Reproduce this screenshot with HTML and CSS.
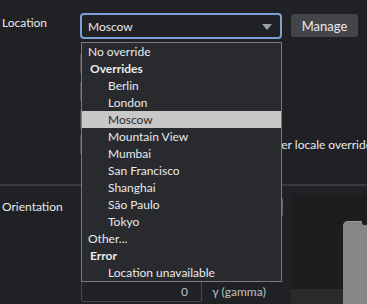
FILE: index.html
```html
<!DOCTYPE html>
<html lang="en">
<head>
    <meta charset="UTF-8">
    <meta name="viewport" content="width=device-width, initial-scale=1.0">
    <title>Sensors</title>
    <link rel="stylesheet" href="styles.css">
</head>
<body>
    <section class="group location">
        <div class="row">
            <div class="label label-top">Location</div>
            <div class="select-wrap">
                <div class="select is-focused">Moscow<span class="arrow"></span></div>
                <ul class="dropdown">
                    <li class="option">No override</li>
                    <li class="optgroup">Overrides</li>
                    <li class="option child">Berlin</li>
                    <li class="option child">London</li>
                    <li class="option child selected">Moscow</li>
                    <li class="option child">Mountain View</li>
                    <li class="option child">Mumbai</li>
                    <li class="option child">San Francisco</li>
                    <li class="option child">Shanghai</li>
                    <li class="option child">São Paulo</li>
                    <li class="option child">Tokyo</li>
                    <li class="option">Other...</li>
                    <li class="optgroup">Error</li>
                    <li class="option child">Location unavailable</li>
                </ul>
            </div>
            <button class="btn">Manage</button>
        </div>

        <div class="fields">
            <div class="field"><div class="input">55.755826</div><span class="field-name">Latitude</span></div>
            <div class="field"><div class="input">37.6173</div><span class="field-name">Longitude</span></div>
            <div class="field"><div class="input">Europe/Moscow</div><span class="field-name">Timezone ID</span></div>
            <div class="field note">
                <div class="input">ru-RU</div><span class="field-name">Locale</span>
                <span class="hint">user locale override</span>
            </div>
        </div>
    </section>

    <section class="group orientation">
        <div class="label">Orientation</div>
        <div class="orient-inputs">
            <div class="select">Off<span class="arrow"></span></div>
            <div class="field"><div class="input num">0</div><span class="field-name">α (alpha)</span></div>
            <div class="field"><div class="input num">90</div><span class="field-name">β (beta)</span></div>
            <div class="field"><div class="input num">0</div><span class="field-name">γ (gamma)</span></div>
        </div>
        <div class="scene">
            <div class="phone"><span class="notch"></span></div>
            <div class="floor"></div>
        </div>
    </section>
</body>
</html>
```

FILE: styles.css
```css
body {
    margin: 0;
    height: 304px;
    overflow: hidden;
    background-color: #202124;
    color: #e8eaed;
    font-family: Lato, "Liberation Sans", sans-serif;
    font-size: 12px;
}
.group {
    padding-left: 2px;
}
.location {
    padding-top: 13px;
    height: 171px;
}
.row {
    display: flex;
    align-items: flex-start;
}
.label {
    width: 78px;
    line-height: 17px;
}
.label-top {
    padding-top: 1px;
}
.select-wrap {
    position: relative;
}
.select {
    position: relative;
    box-sizing: border-box;
    width: 202px;
    height: 26px;
    padding-left: 7px;
    line-height: 23px;
    border: 1px solid #5f6368;
    border-radius: 4px;
    background-color: #202124;
}
.select.is-focused {
    border: 2px solid #7c9fd6;
    line-height: 23px;
    padding-left: 6px;
}
.arrow {
    position: absolute;
    right: 8px;
    top: 9px;
    width: 0;
    height: 0;
    border-left: 5px solid transparent;
    border-right: 5px solid transparent;
    border-top: 6px solid #9aa0a6;
}
.dropdown {
    position: absolute;
    top: 29px;
    left: 1px;
    z-index: 2;
    width: 199px;
    margin: 0;
    padding: 0;
    list-style: none;
    border: 1px solid #7b7b7b;
    background-color: #292a2d;
}
.dropdown li {
    height: 17px;
    line-height: 17px;
    white-space: nowrap;
}
.option {
    padding-left: 6px;
}
.option.child {
    padding-left: 26px;
}
.optgroup {
    padding-left: 8px;
    font-weight: bold;
}
.selected {
    background-color: #c8c8c8;
    color: #2b2b2b;
}
.btn {
    margin-left: 9px;
    margin-top: 1px;
    height: 23px;
    width: 67px;
    padding: 0;
    border: none;
    border-radius: 3px;
    background-color: #444548;
    color: #e8eaed;
    font-family: inherit;
    font-size: 13px;
}
.fields {
    padding-left: 78px;
    padding-top: 7px;
}
.field {
    display: flex;
    align-items: center;
    margin-top: 7px;
}
.field > * {
    flex-shrink: 0;
}
.input {
    box-sizing: border-box;
    width: 121px;
    height: 21px;
    padding: 0 8px;
    line-height: 19px;
    border: 1px solid #4a4b4e;
    border-radius: 2px;
    color: #bdc1c6;
}
.input.num {
    text-align: right;
    padding-right: 13px;
}
.field-name {
    margin-left: 10px;
    color: #bdc1c6;
    white-space: nowrap;
}
.note {
    margin-top: 4px;
}
.note .hint {
    margin-left: 25px;
    white-space: nowrap;
}
.orientation {
    display: flex;
    border-top: 2px solid #3a3b3e;
    height: 118px;
}
.orientation .label {
    width: 79px;
    padding-top: 12px;
}
.orient-inputs {
    width: 202px;
    padding-top: 10px;
}
.orient-inputs .select {
    height: 22px;
    line-height: 20px;
    margin-bottom: 9px;
}
.orient-inputs .field {
    margin-top: 6px;
}
.orient-inputs .field:first-of-type {
    margin-top: 0;
}
.scene {
    position: relative;
    overflow: hidden;
    margin-left: 8px;
    margin-top: 8px;
    flex: 1;
    background-color: #1d1d1f;
}
.floor {
    height: 100%;
    margin-top: 95px;
    background-color: #2a2a2c;
}
.phone {
    position: absolute;
    left: 52px;
    top: 27px;
    z-index: 1;
    width: 60px;
    height: 120px;
    border-radius: 5px 0 0 0;
    background-color: #868686;
    border-top: 1px solid #9a9a9a;
}
.notch {
    position: absolute;
    left: 19px;
    top: -1px;
    width: 6px;
    height: 4px;
    border-radius: 0 0 2px 2px;
    background-color: #1d1d1f;
}
```
